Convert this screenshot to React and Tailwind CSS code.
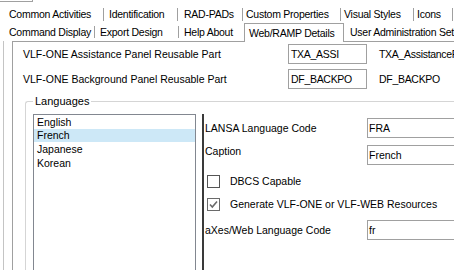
export default function App() {
  const sep1 = <div className="w-px h-[13px] bg-[#a0a0a0] shrink-0" />;
  const sep2 = <div className="w-px h-[12px] bg-[#a0a0a0] shrink-0" />;
  return (
    <div className="w-[454px] h-[270px] overflow-hidden bg-white flex flex-col font-['Liberation_Sans',Arial,sans-serif] text-[11px] text-black leading-none">
      <div className="h-[5px] shrink-0 flex">
        <div className="w-[33px] h-[2px] border-b border-r border-[#a0a0a0]" />
      </div>
      {/* Row 1 tabs */}
      <div className="h-[18px] shrink-0 flex items-center whitespace-nowrap text-[10.5px] tracking-[-0.25px]">
        <div className="w-[103px] pl-[9px] shrink-0">Common Activities</div>
        {sep1}
        <div className="w-[73px] pl-[5px] shrink-0">Identification</div>
        {sep1}
        <div className="w-[64px] pl-[6px] shrink-0">RAD-PADs</div>
        {sep1}
        <div className="w-[97px] pl-[3px] shrink-0">Custom Properties</div>
        {sep1}
        <div className="w-[72px] pl-[3px] shrink-0">Visual Styles</div>
        {sep1}
        <div className="w-[38px] pl-[3px] shrink-0">Icons</div>
        {sep1}
      </div>
      {/* Row 2 tabs */}
      <div className="h-[18px] shrink-0 flex items-end whitespace-nowrap text-[10.5px] tracking-[-0.25px]">
        <div className="h-full flex items-center w-[94px] pl-[9px] shrink-0">Command Display</div>
        <div className="h-full flex items-center">{sep2}</div>
        <div className="h-full flex items-center w-[83px] pl-[5px] shrink-0">Export Design</div>
        <div className="h-full flex items-center">{sep2}</div>
        <div className="h-full flex items-center w-[65px] pl-[5px] shrink-0">Help About</div>
        <div className="relative z-10 -mb-px h-[19px] w-[100px] shrink-0 border-t border-l border-r border-[#a0a0a0] bg-white flex items-center pl-[4px]">
          Web/RAMP Details
        </div>
        <div className="h-full flex items-center pl-[6px] shrink-0">User Administration Settings</div>
      </div>
      {/* Panel */}
      <div className="flex-1 ml-[3px] border-l border-[#c4c4c4] pl-[8px] flex">
        <div className="w-[600px] shrink-0 border-l border-t border-[#a0a0a0] pl-[10px] pt-[2px] flex flex-col">
          <div className="h-[20px] flex items-center whitespace-nowrap">
            <div className="w-[265px] shrink-0 text-[10.5px]">VLF-ONE Assistance Panel Reusable Part</div>
            <div className="w-[79px] h-[20px] shrink-0 border border-[#a0a0a0] flex items-center pl-[2px] text-[10.5px] tracking-[-0.3px]">TXA_ASSI</div>
            <div className="ml-[12px] text-[10.5px] tracking-[-0.3px]">TXA_AssistancePanel</div>
          </div>
          <div className="mt-[5px] h-[20px] flex items-center whitespace-nowrap">
            <div className="w-[265px] shrink-0 text-[10.5px]">VLF-ONE Background Panel Reusable Part</div>
            <div className="w-[79px] h-[20px] shrink-0 border border-[#a0a0a0] flex items-center pl-[2px] text-[10.5px] tracking-[-0.3px]">DF_BACKPO</div>
            <div className="ml-[12px] text-[10.5px] tracking-[-0.3px]">DF_BACKPO</div>
          </div>
          <fieldset className="mt-[6px] ml-[2px] pl-[7px] border-t border-l border-[#d5d5d5] rounded-tl-[3px]">
            <legend className="px-[2px] leading-[12px]">Languages</legend>
            <div className="mt-[7px] flex">
              <div className="w-[163px] h-[200px] shrink-0 border-l border-t border-r border-[#828790] pt-px text-[10.5px]">
                <div className="h-[13px] flex items-center pl-[3px]">English</div>
                <div className="h-[13px] flex items-center pl-[3px] bg-[#cde8f7]">French</div>
                <div className="h-[14px] flex items-center pl-[3px]">Japanese</div>
                <div className="h-[14px] flex items-center pl-[3px]">Korean</div>
              </div>
              <div className="w-[6px] shrink-0" />
              <div className="w-[2px] h-[200px] shrink-0 bg-[#3a3a3a]" />
              <div className="pl-[1px] flex flex-col text-[10.5px] whitespace-nowrap">
                <div className="mt-[4px] h-[20px] flex items-center">
                  <div className="w-[162px] shrink-0">LANSA Language Code</div>
                  <div className="w-[140px] h-[20px] border border-[#a0a0a0] flex items-center pl-[1px]">FRA</div>
                </div>
                <div className="mt-[7px] h-[20px] flex items-start">
                  <div className="w-[162px] shrink-0 leading-[12px]">Caption</div>
                  <div className="w-[140px] h-[20px] border border-[#a0a0a0] flex items-center pl-[1px]">French</div>
                </div>
                <div className="mt-[10px] h-[13px] flex items-center">
                  <div className="ml-[2px] w-[13px] h-[13px] border border-[#555555] bg-white" />
                  <div className="ml-[10px]">DBCS Capable</div>
                </div>
                <div className="mt-[10px] h-[13px] flex items-center">
                  <div className="ml-[2px] w-[13px] h-[13px] border border-[#6a6a6a] bg-white flex items-center justify-center">
                    <svg width="11" height="11" viewBox="0 0 11 11">
                      <path d="M2 5.5 L4.3 8 L9 2.5" fill="none" stroke="#6a6a6a" strokeWidth="1.6" />
                    </svg>
                  </div>
                  <div className="ml-[10px]">Generate VLF-ONE or VLF-WEB Resources</div>
                </div>
                <div className="mt-[9px] h-[20px] flex items-center">
                  <div className="w-[162px] shrink-0">aXes/Web Language Code</div>
                  <div className="w-[140px] h-[20px] border border-[#a0a0a0] flex items-center pl-[1px]">fr</div>
                </div>
              </div>
            </div>
          </fieldset>
        </div>
      </div>
    </div>
  );
}
